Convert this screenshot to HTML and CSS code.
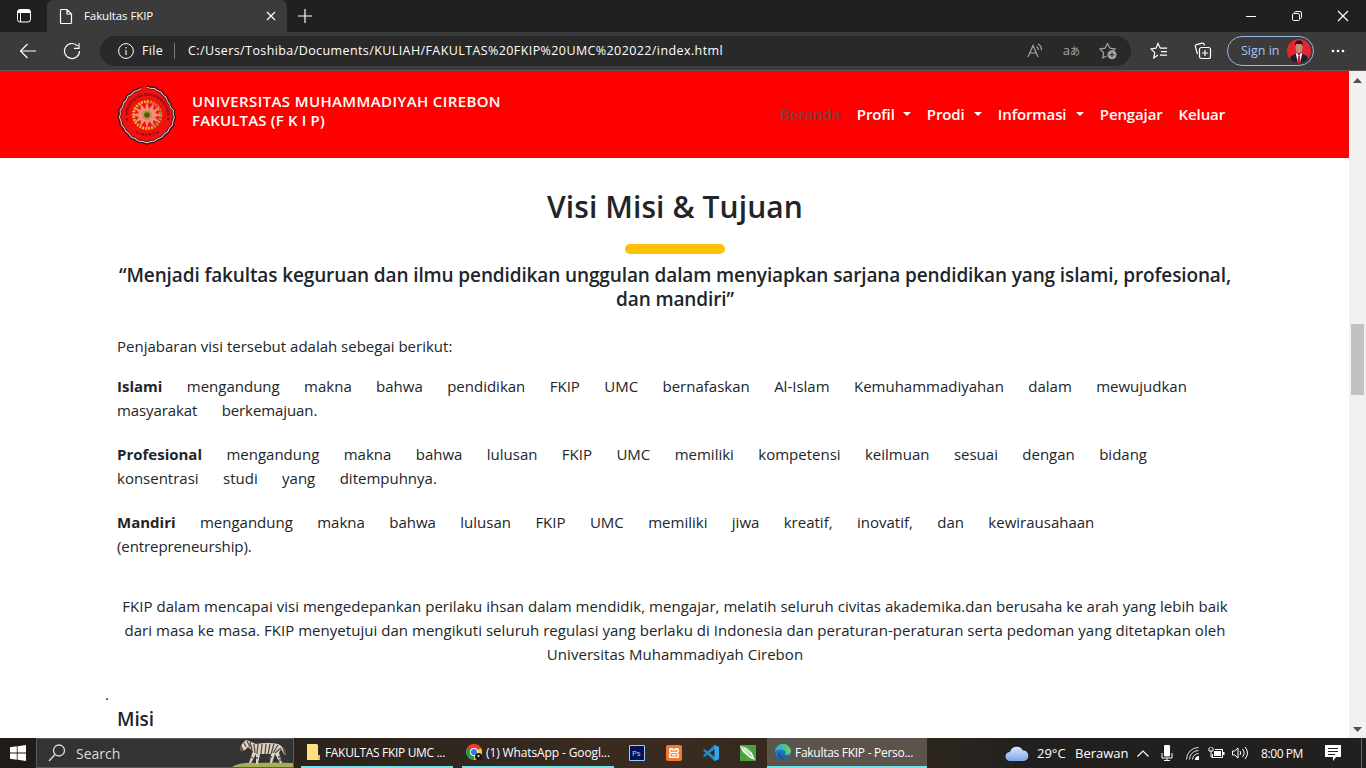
FILE: index.html
```html
<!DOCTYPE html>
<html lang="id">
<head>
<meta charset="utf-8">
<title>Fakultas FKIP</title>
<link rel="stylesheet" href="styles.css">
</head>
<body>
<header class="tabs">
  <svg class="tab-actions" width="16" height="16" viewBox="0 0 16 16"><rect x="1.500" y="1.500" width="13" height="12.500" rx="2.500" fill="none" stroke="#fff"/><path d="M1.500 4a2.500 2.500 0 0 1 2.500-2.500h8A2.500 2.500 0 0 1 14.500 4v1h-13z" fill="#fff"/><path d="M4.500 5v9" stroke="#fff"/></svg>
  <div class="tab">
    <svg class="doc" width="14" height="17" viewBox="0 0 14 17"><path d="M1.500 2.500a1 1 0 0 1 1-1H8L12.500 6v8.500a1 1 0 0 1-1 1h-9a1 1 0 0 1-1-1zM8 1.500V6h4.500" fill="none" stroke="#fff" stroke-width="1.200"/></svg>
    <span class="tab-title">Fakultas FKIP</span>
    <svg class="tab-close" width="10" height="10" viewBox="0 0 10 10"><path d="M1 1l8 8M9 1L1 9" stroke="#fff" stroke-width="1.200"/></svg>
  </div>
  <svg class="new-tab" width="16" height="16" viewBox="0 0 16 16"><path d="M8 1v14M1 8h14" stroke="#fff" stroke-width="1.200"/></svg>
  <div class="window-buttons">
    <svg width="12" height="12" viewBox="0 0 12 12"><path d="M1 6.500h10" stroke="#fff"/></svg>
    <svg width="12" height="12" viewBox="0 0 12 12"><path d="M3.500 3V2.500a1 1 0 0 1 1-1H9A1.500 1.500 0 0 1 10.500 3v4.500a1 1 0 0 1-1 1H9" fill="none" stroke="#fff"/><rect x="1.500" y="3.500" width="7" height="7" rx="1.200" fill="none" stroke="#fff"/></svg>
    <svg width="12" height="12" viewBox="0 0 12 12"><path d="M1 1l10 10M11 1L1 11" stroke="#fff" stroke-width="1.200"/></svg>
  </div>
</header>
<div class="toolbar">
  <svg class="back" width="18" height="16" viewBox="0 0 18 16"><path d="M17 8H2M8.500 1L1.500 8l7 7" fill="none" stroke="#fff" stroke-width="1.200"/></svg>
  <svg class="reload" width="18" height="18" viewBox="0 0 18 18"><path d="M16.500 9A7.500 7.500 0 1 1 14.600 4M16 1.300v5h-5" fill="none" stroke="#fff" stroke-width="1.200"/></svg>
  <div class="address">
    <svg class="info" width="16" height="16" viewBox="0 0 16 16"><circle cx="8" cy="8" r="7.400" fill="none" stroke="#fff"/><path d="M8 7v5M8 4v1.400" stroke="#ddd" stroke-width="1.300"/></svg>
    <span class="scheme">File</span>
    <span class="divider"></span>
    <span class="url">C:/Users/Toshiba/Documents/KULIAH/FAKULTAS%20FKIP%20UMC%202022/index.html</span>
    <div class="address-icons">
      <svg width="17" height="16" viewBox="0 0 17 16"><path d="M1 14L6 2.500 11 14M2.700 10h6.600M9.500 3.500c1.300.8 1.800 2 1.700 3.500M11 1c2.600 1.400 3.700 3.500 3.400 6.200" fill="none" stroke="#a5a5a5" stroke-width="1.200"/></svg>
      <span class="translate">a<small>あ</small></span>
      <svg width="18" height="18" viewBox="0 0 18 18"><path d="M7.500 14L3.800 16l.8-5.300L1 7l5-.8L8.500 1.500 11 6.200l5 .8-2 2" fill="none" stroke="#a5a5a5" stroke-width="1.200"/><circle cx="13" cy="12.800" r="4.500" fill="#a5a5a5"/><path d="M13 10.300v5M10.500 12.800h5" stroke="#292929"/></svg>
    </div>
  </div>
  <svg class="favorites" width="18" height="18" viewBox="0 0 18 18"><path d="M8 13L3.800 16l.9-5.300L1 7l5-.8L8 1.500l2.300 4.700H17M11 9.700h6M10 13.200h7" fill="none" stroke="#fff" stroke-width="1.200"/></svg>
  <svg class="collections" width="18" height="18" viewBox="0 0 18 18"><path d="M3.500 12L1.300 4.600a1.500 1.500 0 0 1 1-1.900l6-1.600a1.500 1.500 0 0 1 1.800 1l.4 1.400" fill="none" stroke="#fff" stroke-width="1.200"/><rect x="5.500" y="5.500" width="11" height="11" rx="2" fill="none" stroke="#fff" stroke-width="1.200"/><path d="M11 8v6M8 11h6" stroke="#fff" stroke-width="1.200"/></svg>
  <div class="sign-in"><span>Sign in</span>
    <svg width="24" height="24" viewBox="0 0 24 24"><defs><clipPath id="av"><circle cx="12" cy="12" r="12"/></clipPath></defs><g clip-path="url(#av)"><path d="M0 0h24v24H0z" fill="#e32630"/><path d="M2 24l2-7 5.500-2.500h5L20 17l2 7z" fill="#182131"/><path d="M9.500 13.500l2.500 3 2.500-3 .5 2-2 8.500h-2L9 15.500z" fill="#fff"/><path d="M11.200 16.500h1.600l.8 7.500h-3.200z" fill="#d41a28"/><ellipse cx="12" cy="8.800" rx="3.500" ry="5.200" fill="#c88d76"/><path d="M8.200 7c-.6-3.500.8-5.500 3.800-5.500S16.400 3.500 15.800 7l-.8-2H9z" fill="#1b1717"/></g></svg>
  </div>
  <svg class="more" width="14" height="4" viewBox="0 0 14 4"><circle cx="2" cy="2" r="1.300" fill="#fff"/><circle cx="7" cy="2" r="1.300" fill="#fff"/><circle cx="12" cy="2" r="1.300" fill="#fff"/></svg>
</div>
<div class="viewport">
  <main class="page">
    <nav class="navbar">
      <svg class="logo" width="60" height="60" viewBox="0 0 60 60">
        <defs><path id="ring" d="M12.500 39A19.500 19.500 0 1 1 47.500 39"/><path id="ring2" d="M8 35A23 23 0 0 0 52 35"/>
        <path id="scallop" d="M30 1Q34 3 37.800 2.200 40.500 5.500 44.500 6 46 9.500 49.800 11.500 50.500 15.500 53.500 18.500 53.500 22 57.500 25 56.500 29 58.500 32.500 56.500 36 56.500 40.500 53 43 51.500 47.500 47.500 49 45.500 53 41.500 54 38 57 34.500 57 30 59 25.500 57 21 57 17.500 54 13.500 53 11.500 49 8 47 6.500 43 3.300 40 3.500 36 1.300 32.500 3 29 2 25 5.300 22 5.500 17.500 9 15 10 10.500 14 9.500 16.500 5.500 20.500 5 24 2.500 30 1Z"/></defs>
        <use href="#scallop" fill="#f51010" stroke="#241b20" stroke-width="1.600"/>
        <use href="#scallop" fill="none" stroke="#dcc5c9" stroke-width="1.100" transform="translate(1.200 1.200) scale(.96)"/>
        <use href="#scallop" fill="none" stroke="#3d2026" stroke-width=".8" transform="translate(2.400 2.400) scale(.92)"/>
        <text class="logo-text"><textPath href="#ring" startOffset="50%" text-anchor="middle">★ UNIVERSITAS MUHAMMADIYAH ★</textPath></text>
        <text class="logo-text"><textPath href="#ring2" startOffset="50%" text-anchor="middle">C I R E B O N</textPath></text>
        <circle cx="30" cy="30" r="13.500" fill="none" stroke="#dfb92c" stroke-width="2.800" stroke-dasharray="2 1"/>
        <path d="M33 17a13.500 13.500 0 0 1 4 24.500" fill="none" stroke="#6f7a2c" stroke-width="1.600" stroke-dasharray="1.500 1.500"/>
        <path d="M30 16l2 8 5-6-1 7 7-3-5 6 8 2-8 2 5 6-7-3 1 7-5-6-2 8-2-8-5 6 1-7-7 3 5-6-8-2 8-2-5-6 7 3-1-7 5 6z" fill="#f48d82"/>
        <circle cx="30" cy="30" r="5" fill="#b99c2c"/><circle cx="30" cy="30" r="2.800" fill="#5a5220"/>
      </svg>
      <div class="brand"><span class="brand-name">UNIVERSITAS MUHAMMADIYAH CIREBON</span><br><span class="brand-unit">FAKULTAS (F K I P)</span></div>
      <ul class="menu">
        <li class="active">Beranda</li>
        <li class="drop d1">Profil</li>
        <li class="drop d2">Prodi</li>
        <li class="drop d3">Informasi</li>
        <li>Pengajar</li>
        <li>Keluar</li>
      </ul>
    </nav>
    <section class="container">
      <h2>Visi Misi &amp; Tujuan</h2>
      <div class="rule"></div>
      <h5 class="vision">“Menjadi fakultas keguruan dan ilmu pendidikan unggulan dalam menyiapkan sarjana pendidikan yang islami, profesional,<br>dan mandiri”</h5>
      <p class="intro">Penjabaran visi tersebut adalah sebegai berikut:</p>
      <p class="spaced"><b>Islami</b> mengandung makna bahwa pendidikan FKIP UMC bernafaskan Al-Islam Kemuhammadiyahan dalam mewujudkan<br><span class="tight">masyarakat berkemajuan.</span></p>
      <p class="spaced"><b>Profesional</b> mengandung makna bahwa lulusan FKIP UMC memiliki kompetensi keilmuan sesuai dengan bidang<br>konsentrasi studi yang ditempuhnya.</p>
      <p class="spaced"><b>Mandiri</b> mengandung makna bahwa lulusan FKIP UMC memiliki jiwa kreatif, inovatif, dan kewirausahaan<br><span class="tight">(entrepreneurship).</span></p>
      <p class="closing">FKIP dalam mencapai visi mengedepankan perilaku ihsan dalam mendidik, mengajar, melatih seluruh civitas akademika.dan berusaha ke arah yang lebih baik<br>dari masa ke masa. FKIP menyetujui dan mengikuti seluruh regulasi yang berlaku di Indonesia dan peraturan-peraturan serta pedoman yang ditetapkan oleh<br>Universitas Muhammadiyah Cirebon</p>
      <div class="dot">.</div>
      <h5 class="mission">Misi</h5>
    </section>
  </main>
  <div class="scrollbar">
    <svg width="9" height="5" viewBox="0 0 9 5"><path d="M0 5l4.500-5L9 5z" fill="#505050"/></svg>
    <div class="thumb"></div>
    <svg class="down" width="9" height="5" viewBox="0 0 9 5"><path d="M0 0l4.500 5L9 0z" fill="#505050"/></svg>
  </div>
</div>
<footer class="taskbar">
  <svg class="windows" width="16" height="16" viewBox="0 0 16 16"><path d="M0 2.300L6.800 1.300v6.300H0zM7.600 1.200L16 0v7.600H7.600zM0 8.400h6.800v6.300L0 13.700zM7.600 8.400H16V16l-8.400-1.200z" fill="#fff"/></svg>
  <div class="search">
    <svg width="18" height="18" viewBox="0 0 18 18"><circle cx="11" cy="6.500" r="5.500" fill="none" stroke="#ddd" stroke-width="1.300"/><path d="M7 10.500L1 17" stroke="#ddd" stroke-width="1.400"/></svg>
    <span>Search</span>
    <svg class="zebra" width="61" height="28" viewBox="0 0 61 28"><path d="M0 28q8-5 24-4 18-1 37 0v4z" fill="#a5ad5b"/><path d="M8 10l2-5 4-4 3 1 7 3q12-2 22 0 5 2 7 8l1 3-2-1-3-5-2 4 3 10h-2l-5-9-3 9h-2l1-9H28l-2 10h-2v-10l-5 9h-2l4-12-5-4-3 3-4 1z" fill="#e0d3c3"/><path d="M12 4l2 4M15 2l3 6M18 3l2 8M22 5l1 9M26 5l-1 10M30 5l-1 10M34 5l-1 10M38 5l-2 10M42 5l-3 10M46 6l-5 8M49 9l-6 5M19 18l2 1M24 19h2M37 18h3M46 18h2M47 21h2" stroke="#5a4a43" stroke-width="1.300"/><path d="M8 10l1.500-3 2 3.500-2 2zM50 7l3.500 3 1 6-2.500-2z" fill="#6a4539"/></svg>
  </div>
  <div class="task folder">
    <svg width="13" height="16" viewBox="0 0 13 16"><path d="M0 0h10l1 1v12h2v3H0z" fill="#ffdf80"/><path d="M11 11h2v5h-2z" fill="#e9b94b"/></svg>
    <span>FAKULTAS FKIP UMC ...</span>
  </div>
  <div class="task chrome">
    <svg width="16" height="16" viewBox="0 0 16 16"><path d="M8 8L1 4a8 8 0 0 1 14 0z" fill="#e4412f"/><path d="M8 8L1 4a8 8 0 0 0 7 12z" fill="#269b50"/><path d="M8 8l7-4a8 8 0 0 1-7 12z" fill="#fbc52d"/><circle cx="8" cy="8" r="4" fill="#fff"/><circle cx="8" cy="8" r="3.100" fill="#3579e6"/><circle cx="12.500" cy="12.500" r="3.500" fill="#191919"/><circle cx="12.500" cy="12" r="1" fill="#fff"/></svg>
    <span>(1) WhatsApp - Googl...</span>
  </div>
  <div class="pins">
    <svg width="16" height="16" viewBox="0 0 16 16"><path d="M.5.500h15v15H.5z" fill="#001452" stroke="#a1c8ff"/><text x="3" y="11" class="ps">Ps</text></svg>
    <svg width="16" height="16" viewBox="0 0 16 16"><rect width="16" height="16" rx="2" fill="#f37a2b"/><path d="M4.500 3h2L8 4.500 9.500 3h2Q13 3 13 4.500v2L12 8l1 1.500v2q0 1.500-1.500 1.500h-7Q3 13 3 11.500v-2L4 8 3 6.500v-2Q3 3 4.500 3z" fill="#fff"/><path d="M5.200 5v1.200h5.600V5M5.200 11V9.500q0-1 1-1h3.600q1 0 1 1V11z" fill="none" stroke="#f37a2b" stroke-width="1.200"/></svg>
    <svg width="16" height="16" viewBox="0 0 16 16"><path d="M11.500 0L16 2v12l-4.500 2L0 5.500 1.500 4 12 12V4L1.500 12 0 10.500z" fill="#2489ca"/><path d="M11.500 0L16 2v12l-4.500 2z" fill="#35a5ee"/></svg>
    <svg width="16" height="16" viewBox="0 0 16 16"><path d="M0 0h16v16H0z" fill="#46a33e"/><path d="M0 1l7 2 5 5 3 7-5-2-7-6z" fill="#fff"/><path d="M2 2l8 9M6 3l6 9" stroke="#68a95e" stroke-width=".8"/></svg>
  </div>
  <div class="task edge">
    <svg width="16" height="16" viewBox="0 0 16 16"><defs><linearGradient id="eg"><stop stop-color="#2aa9e5"/><stop offset="1" stop-color="#63d45b"/></linearGradient></defs><circle cx="8" cy="8" r="8" fill="#1779c9"/><path d="M0 8a8 8 0 0 1 16-.5c0 3-4 4-6 2.500 1-1 .7-3.500-2-4C4.500 5.300 1 6 0 8z" fill="url(#eg)"/><path d="M5.500 8c-1 4 2 7 6 7C7 17 2 14 3 9.500z" fill="#1555a2"/><path d="M7 8.500c0 4 4 5 8 3l-1 1.500c-4 2-8 0-7-4.500z" fill="#4d4a47"/></svg>
    <span>Fakultas FKIP - Perso...</span>
  </div>
  <div class="tray">
    <svg class="cloud" width="24" height="16" viewBox="0 0 24 16"><defs><linearGradient id="cg" x2="0" y2="1"><stop stop-color="#d9e8ff"/><stop offset="1" stop-color="#7fa6e8"/></linearGradient></defs><path d="M5 16a4.500 4.500 0 0 1 0-9 7 7 0 0 1 13-1.500A5.300 5.300 0 0 1 19 16z" fill="url(#cg)"/></svg>
    <span class="temp">29°C</span><span class="weather">Berawan</span>
    <svg class="chevron" width="12" height="7" viewBox="0 0 12 7"><path d="M.5 6.500L6 1l5.500 5.500" fill="none" stroke="#fff" stroke-width="1.200"/></svg>
    <svg class="mic" width="12" height="16" viewBox="0 0 12 16"><rect x="3" width="6" height="11.500" rx="1" fill="#fff"/><path d="M1 8v5h10V8M6 13v2M3 15.500h6" fill="none" stroke="#fff"/></svg>
    <svg class="wifi" width="13" height="13" viewBox="0 0 13 13"><path d="M.5 12.500A12 12 0 0 1 12.500.5M3.500 12.500a9 9 0 0 1 9-9M6.500 12.500a6 6 0 0 1 6-6" fill="none" stroke="#ddd"/><path d="M9 13a4 4 0 0 1 4-4v4z" fill="#fff"/></svg>
    <svg class="battery" width="17" height="12" viewBox="0 0 17 12"><path d="M1 1v3h4V1M2 0v1M4 0v1M3 4v6h2" fill="none" stroke="#fff"/><path d="M7 2.500h7.500v8h-10V7" fill="none" stroke="#fff"/><path d="M6 4h7v5H6zM15 5h1.500v3H15z" fill="#fff"/></svg>
    <svg class="volume" width="17" height="14" viewBox="0 0 17 14"><path d="M.5 5v4h2.200L6 12V2L2.700 5zM8 5q1.500 2 0 4M10.500 3q3.200 4 0 8M13 1q5 6 0 12" fill="none" stroke="#fff"/></svg>
    <span class="clock">8:00 PM</span>
    <svg class="notify" width="16" height="16" viewBox="0 0 16 16"><path d="M0 0h16v12h-5l-3 4v-4H0z" fill="#fff"/><path d="M3 3.500h10M3 6.500h10M3 9.500h7" stroke="#222"/></svg>
    <span class="peek"></span>
  </div>
</footer>
</body>
</html>
```
FILE: styles.css
```css
* { box-sizing: border-box; }
body { margin: 0; width: 1366px; height: 768px; overflow: hidden; display: flex; flex-direction: column; font-family: "Open Sans", "Noto Sans", sans-serif; color: #212529; background: #fff; white-space: nowrap; }
svg { display: block; flex: none; }

.tabs { height: 32px; flex: none; background: #202020; display: flex; align-items: center; color: #fff; }
.tab-actions { margin-left: 16px; }
.tab { align-self: stretch; margin-left: 15px; width: 240px; background: #3b3b3b; border-radius: 6px 6px 0 0; display: flex; align-items: center; padding: 0 11px 0 12px; }
.tab-title { margin-left: 11px; margin-top: -2px; font-size: 11.5px; letter-spacing: -.1px; flex: 1; }
.new-tab { margin-left: 10px; }
.window-buttons { margin-left: auto; margin-right: 17px; display: flex; gap: 34px; }

.toolbar { height: 39px; flex: none; background: #3b3b3b; border-bottom: 1px solid #6a5656; display: flex; align-items: center; color: #fff; font-size: 12.5px; padding-bottom: 1px; }
.back { margin-left: 19px; }
.reload { margin-left: 26px; }
.address { margin-left: 19px; width: 1031px; height: 30px; border-radius: 15px; background: #292929; display: flex; align-items: center; padding: 0 14px 0 18px; }
.scheme { margin-left: 8px; width: 32px; letter-spacing: .3px; }
.divider { width: 1px; height: 16px; background: #777; }
.url { margin-left: 13px; letter-spacing: .402px; }
.address-icons { margin-left: auto; display: flex; align-items: center; gap: 19px; color: #a5a5a5; }
.translate { font: 13px/18px "Open Sans", "Noto Sans CJK JP", sans-serif; }
.translate small { font-size: 10px; }
.favorites { margin-left: 19px; }
.collections { margin-left: 26px; }
.sign-in { margin-left: 15px; width: 87px; height: 30px; border: 1.5px solid #9ab6e2; border-radius: 15px; display: flex; align-items: center; justify-content: space-between; padding: 0 2px 0 13px; color: #a7c5f5; }
.more { margin-left: 17px; }

.viewport { height: 667px; flex: none; display: flex; }
.page { width: 1349px; overflow: hidden; }
.navbar { height: 87px; background: #f00; color: #fff; display: flex; align-items: flex-start; padding: 14px 124px 0 117px; font-size: 15px; font-weight: 600; }
.logo-text { font: bold 4px "Liberation Sans", sans-serif; fill: #551018; }
.brand { margin: 7px 0 0 15px; line-height: 19px; }
.brand-name { letter-spacing: .38px; }
.brand-unit { letter-spacing: .17px; }
.menu { margin: 17px 0 0 auto; padding: 0; list-style: none; display: flex; line-height: 24px; letter-spacing: -.12px; }
.menu li { margin-left: 16px; }
.menu .active { color: #7a4040; }
.drop { display: flex; align-items: center; justify-content: space-between; }
.drop::after { content: ""; border: 4px solid transparent; border-top-color: #fff; border-bottom: 0; }
.d1 { width: 54px; }
.d2 { width: 55px; }
.d3 { width: 86px; }

.container { padding: 0 116px 0 117px; font-size: 15px; line-height: 24px; }
h2 { margin: 30px 0 0; font-size: 30px; line-height: 38px; font-weight: 600; text-align: center; letter-spacing: .08px; }
.rule { width: 100px; height: 10px; border-radius: 5px; background: #ffc107; margin: 18px auto 9px; }
h5 { margin: 0; font-size: 19px; line-height: 24px; font-weight: 600; letter-spacing: -.119px; }
.vision { display: flex; flex-direction: column; align-items: center; text-align: center; }
p { margin: 0 0 20px; }
.intro { margin: 23px 0 16px; }
.spaced { word-spacing: 20.5px; }
.tight { letter-spacing: -.09px; }
.closing { margin: 36px 0 16px; text-align: center; letter-spacing: .038px; }
.dot { margin-left: -12px; height: 25px; }
.scrollbar { width: 17px; background: #f1f1f1; display: flex; flex-direction: column; align-items: center; padding: 7px 0 6px; }
.thumb { width: 13px; height: 71px; background: #c1c1c1; margin-top: 241px; }
.down { margin-top: auto; }

.taskbar { height: 30px; flex: none; background: linear-gradient(90deg, #1f1b18, #392b20 45%, #33291f 65%, #21201e 75%); color: #fff; display: flex; align-items: center; font-size: 12px; }
.windows { margin-left: 10px; }
.search { align-self: stretch; margin-left: 10px; width: 258px; background: #333; border: 1px solid #5c5c5c; display: flex; align-items: center; padding-left: 11px; color: #ddd; font-size: 14px; }
.search span { margin-left: 10px; }
.zebra { margin-left: auto; }
.task { align-self: stretch; border-bottom: 2px solid #76e1e8; display: flex; align-items: center; }
.folder { margin-left: 7px; width: 152px; padding-left: 6px; gap: 5px; letter-spacing: -.33px; }
.chrome { margin-left: 9px; width: 152px; padding-left: 4px; gap: 4px; letter-spacing: -.12px; }
.pins { display: flex; gap: 21px; margin-left: 15px; }
.ps { font: 8px "Open Sans", sans-serif; fill: #b4d5ff; }
.edge { margin-left: 11px; width: 160px; padding-left: 8px; gap: 4px; background: #5b534c; letter-spacing: -.28px; }
.tray { align-self: stretch; margin-left: 78px; flex: 1; display: flex; align-items: center; }
.temp { margin-left: 8px; width: 38px; font-size: 13px; }
.weather { width: 62px; font-size: 13px; }
.mic { margin-left: 12px; }
.wifi { margin-left: 13px; }
.battery { margin-left: 9px; }
.volume { margin-left: 7px; }
.clock { margin-left: 12px; width: 42px; letter-spacing: -.41px; }
.notify { margin-left: 22px; }
.peek { margin-left: 20px; width: 1px; height: 30px; background: #666; }
```
